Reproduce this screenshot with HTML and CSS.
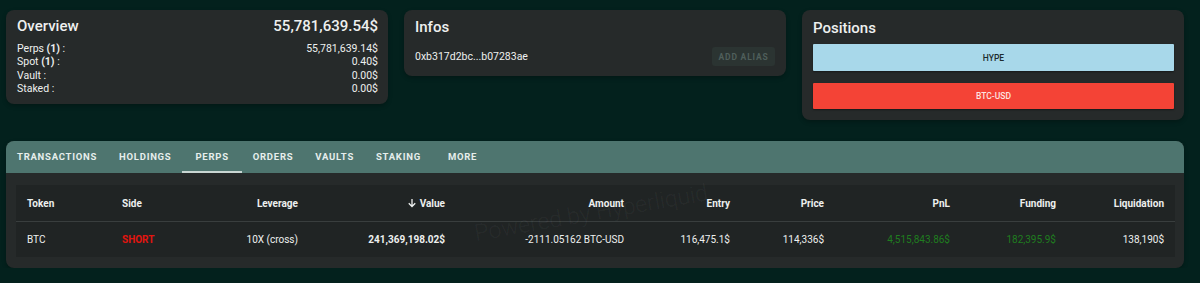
FILE: index.html
```html
<!DOCTYPE html>
<html lang="en">
<head>
    <meta charset="UTF-8">
    <meta name="viewport" content="width=device-width, initial-scale=1.0">
    <title>Wallet overview</title>
    <link rel="stylesheet" href="styles.css">
</head>
<body>
    <div class="page">
        <div class="top-grid">
            <div class="card overview">
                <div class="card-head">
                    <h2>Overview</h2>
                    <span class="total">55,781,639.54$</span>
                </div>
                <div class="line"><span>Perps <b>(1)</b> :</span><span>55,781,639.14$</span></div>
                <div class="line"><span>Spot <b>(1)</b> :</span><span>0.40$</span></div>
                <div class="line"><span>Vault :</span><span>0.00$</span></div>
                <div class="line"><span>Staked :</span><span>0.00$</span></div>
            </div>

            <div class="card infos">
                <h2>Infos</h2>
                <div class="address-row">
                    <span class="address">0xb317d2bc...b07283ae</span>
                    <button class="alias-btn" disabled>ADD ALIAS</button>
                </div>
            </div>

            <div class="card positions">
                <h2>Positions</h2>
                <button class="pos-btn hype">HYPE</button>
                <button class="pos-btn btc">BTC-USD</button>
            </div>
        </div>

        <div class="card tabs-card">
            <div class="tab-bar">
                <span class="tab">TRANSACTIONS</span>
                <span class="tab">HOLDINGS</span>
                <span class="tab active">PERPS</span>
                <span class="tab">ORDERS</span>
                <span class="tab">VAULTS</span>
                <span class="tab">STAKING</span>
                <span class="tab more">MORE</span>
            </div>
            <div class="tab-body">
                <div class="table-wrap">
                    <table class="perps">
                        <colgroup>
                            <col style="width:95px">
                            <col style="width:95px">
                            <col style="width:103px">
                            <col style="width:147px">
                            <col style="width:179px">
                            <col style="width:106px">
                            <col style="width:94px">
                            <col style="width:126px">
                            <col style="width:106px">
                            <col style="width:108px">
                        </colgroup>
                        <thead>
                            <tr>
                                <th class="left">Token</th>
                                <th class="left">Side</th>
                                <th>Leverage</th>
                                <th><svg class="sort-icon" viewBox="0 0 24 24" width="12" height="12"><path d="M12 4v15M5.5 12.5 12 19l6.5-6.5" fill="none" stroke="currentColor" stroke-width="2.6"/></svg>Value</th>
                                <th>Amount</th>
                                <th>Entry</th>
                                <th>Price</th>
                                <th>PnL</th>
                                <th>Funding</th>
                                <th>Liquidation</th>
                            </tr>
                        </thead>
                        <tbody>
                            <tr>
                                <td class="left">BTC</td>
                                <td class="left short">SHORT</td>
                                <td>10X (cross)</td>
                                <td class="strong">241,369,198.02$</td>
                                <td>-2111.05162 BTC-USD</td>
                                <td>116,475.1$</td>
                                <td>114,336$</td>
                                <td class="gain">4,515,843.86$</td>
                                <td class="gain">182,395.9$</td>
                                <td>138,190$</td>
                            </tr>
                        </tbody>
                    </table>
                    <div class="watermark">Powered by Hyperliquid</div>
                </div>
            </div>
        </div>
    </div>
</body>
</html>
```

FILE: styles.css
```css
body {
    margin: 0;
    background-color: #03211d;
    font-family: Roboto, 'Liberation Sans', sans-serif;
    color: #eef0ef;
}
.page {
    width: 1178px;
    padding: 10px 0 0 6px;
}
.top-grid {
    display: grid;
    grid-template-columns: repeat(3, 1fr);
    gap: 16px;
    align-items: start;
    margin-bottom: 21px;
}
.card {
    background: #262a2a;
    border-radius: 8px;
    box-shadow: 0 2px 4px rgba(0,0,0,0.25);
}
h2 {
    margin: 0;
    font-size: 15px;
    font-weight: 500;
    line-height: 20px;
}
.overview {
    padding: 6px 10px 8px 11px;
}
.card-head {
    display: flex;
    justify-content: space-between;
    align-items: center;
    margin-bottom: 6px;
}
.total {
    font-size: 15px;
    font-weight: 500;
}
.line {
    display: flex;
    justify-content: space-between;
    font-size: 10.5px;
    line-height: 13.4px;
}
.line b {
    font-weight: 700;
}
.infos {
    padding: 7px 11px 10px 11px;
}
.address-row {
    display: flex;
    justify-content: space-between;
    align-items: center;
    margin-top: 10px;
}
.address {
    font-size: 10.5px;
}
.alias-btn {
    background: #2b3432;
    color: #4f5f5b;
    border: none;
    border-radius: 3px;
    font-family: inherit;
    font-size: 8.5px;
    font-weight: 700;
    letter-spacing: 0.8px;
    height: 19px;
    width: 63px;
    padding: 0;
}
.positions {
    padding: 8px 10px 11px 11px;
    display: flex;
    flex-direction: column;
}
.positions h2 {
    margin-bottom: 6px;
}
.pos-btn {
    border: none;
    border-radius: 1px;
    height: 27px;
    font-family: inherit;
    font-size: 8.5px;
    font-weight: 500;
    box-shadow: 0 1px 2px rgba(0,0,0,0.4);
}
.hype {
    background: #a8d8ea;
    color: #1d2b2e;
    margin-bottom: 12px;
}
.btc {
    background: #f44336;
    color: #fde4e1;
    height: 26px;
}
.tab-bar {
    display: flex;
    background: #4e756f;
    border-radius: 8px 8px 0 0;
    height: 32px;
    align-items: stretch;
}
.tab {
    display: flex;
    align-items: center;
    padding: 0 11px;
    font-size: 9.5px;
    font-weight: 700;
    letter-spacing: 0.75px;
    color: #e6eeec;
    border-bottom: 2px solid transparent;
    box-sizing: border-box;
}
.tab.active {
    border-bottom-color: #c9d6d3;
    padding: 0 13px;
}
.tab.more {
    padding-left: 16px;
}
.tab-body {
    padding: 12px 9px 11px 10px;
}
.table-wrap {
    position: relative;
    background: #202424;
}
.perps {
    width: 1159px;
    table-layout: fixed;
    border-collapse: collapse;
    font-size: 10px;
}
.perps th,
.perps td {
    text-align: right;
    padding: 0 11px;
    white-space: nowrap;
}
.perps th {
    height: 36px;
    font-weight: 700;
    border-bottom: 1px solid #393e3e;
}
.perps td {
    height: 35px;
}
.perps .left {
    text-align: left;
}
.sort-icon {
    vertical-align: -2px;
    margin-right: 2px;
}
.short {
    color: #e2140f;
    font-weight: 700;
}
.strong {
    font-weight: 700;
}
.gain {
    color: #1f7d1f;
}
.watermark {
    position: absolute;
    left: 461px;
    top: 36px;
    font-size: 23px;
    font-weight: 300;
    line-height: 26px;
    color: rgba(255,255,255,0.05);
    transform: rotate(-10deg);
    transform-origin: left bottom;
    white-space: nowrap;
    pointer-events: none;
}
```
